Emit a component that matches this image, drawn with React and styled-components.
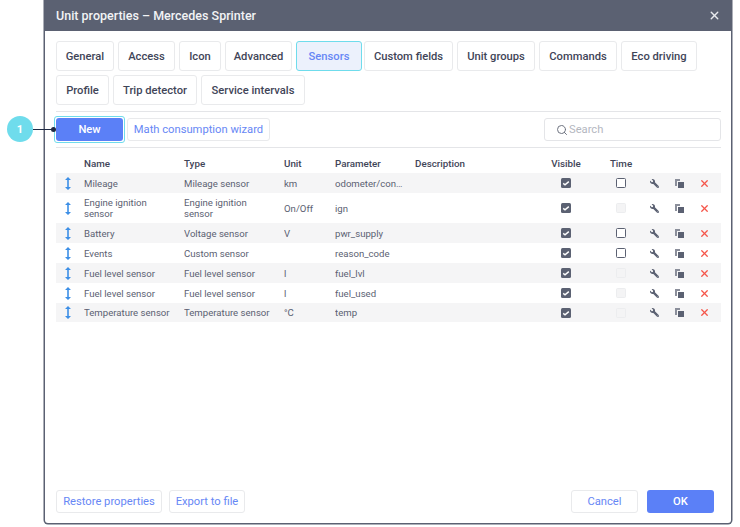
import React from "react";
import styled, { createGlobalStyle } from "styled-components";
import { Search, X } from "lucide-react";
import { FaWrench } from "react-icons/fa";

const GlobalStyle = createGlobalStyle`
  html, body {
    margin: 0;
    padding: 0;
    background: #fff;
  }
  body {
    font-family: Roboto, "Liberation Sans", sans-serif;
  }
`;

const Page = styled.div`
  position: relative;
  width: 740px;
  height: 527px;
  padding-left: 45px;
  box-sizing: border-box;
  overflow: hidden;
`;

const Modal = styled.div`
  width: 686px;
  height: 523px;
  display: flex;
  flex-direction: column;
  background: #fff;
  border-radius: 0 0 3px 3px;
  box-shadow: 0 0 0 1.5px #5b6172;
`;

const Header = styled.div`
  height: 31px;
  flex: none;
  display: flex;
  align-items: center;
  justify-content: space-between;
  padding: 0 10px 0 11px;
  background: #5b6172;
  color: #f2f3f5;
  font-size: 12.5px;
  font-weight: 500;
`;

const CloseButton = styled.span`
  display: flex;
  color: #e8eaee;
`;

const Body = styled.div`
  flex: 1;
  display: flex;
  flex-direction: column;
  padding: 10px 10px 10px 11px;
  min-height: 0;
`;

const Tabs = styled.div`
  display: flex;
  flex-wrap: wrap;
  gap: 4px;
  padding-bottom: 6px;
  border-bottom: 1px solid #e4e5e8;
`;

const Tab = styled.div`
  height: 30px;
  width: ${(p) => p.$w}px;
  box-sizing: border-box;
  display: flex;
  align-items: center;
  justify-content: center;
  border-radius: 3px;
  font-size: 11.2px;
  font-weight: 500;
  color: ${(p) => (p.$active ? "#6787f5" : "#3f4558")};
  background: ${(p) => (p.$active ? "#ecf1fc" : "#fff")};
  border: 1px solid ${(p) => (p.$active ? "#6fdcec" : "#e9eaec")};
  margin-right: ${(p) => (p.$active ? "-2px" : "0")};
`;

const Toolbar = styled.div`
  height: 35px;
  display: flex;
  align-items: center;
  gap: 2px;
  border-bottom: 1px solid #e4e5e8;
`;

const PrimaryButton = styled.div`
  width: ${(p) => p.$w}px;
  height: 23px;
  display: flex;
  align-items: center;
  justify-content: center;
  background: #5b80f7;
  color: #fff;
  font-size: 11.2px;
  font-weight: 500;
  border-radius: 3px;
`;

const FocusRing = styled.div`
  display: flex;
  padding: 1px;
  margin-left: -2px;
  border: 1px solid #6fdcec;
  border-radius: 3px;
`;

const GhostButton = styled.div`
  height: 23px;
  width: ${(p) => p.$w}px;
  box-sizing: border-box;
  display: flex;
  align-items: center;
  justify-content: center;
  border: 1px solid #e9eaec;
  border-radius: 3px;
  color: #6787f5;
  font-size: 11.2px;
`;

const SearchBox = styled.div`
  margin-left: auto;
  width: 177px;
  height: 23px;
  box-sizing: border-box;
  display: flex;
  align-items: center;
  gap: 1px;
  padding-left: 11px;
  border: 1px solid #e4e5e8;
  border-radius: 3px;
  color: #b4b7bf;
  font-size: 11.2px;
  svg {
    color: #6e7380;
  }
`;

const Table = styled.div`
  flex: 1;
  padding-top: 5px;
  display: flex;
  flex-direction: column;
`;

const Row = styled.div`
  display: grid;
  grid-template-columns: 28px 100px 100px 51px 80px 117px 68px 42px 24px 26px 24px 5px;
  align-items: center;
  height: ${(p) => p.$h}px;
  background: ${(p) => (p.$striped ? "#f5f5f6" : "transparent")};
`;

const HeadCell = styled.div`
  font-size: 9.8px;
  font-weight: 500;
  color: #3f4558;
  text-align: ${(p) => (p.$center ? "center" : "left")};
`;

const Cell = styled.div`
  font-size: 9.6px;
  line-height: 11px;
  color: #5b6172;
  white-space: ${(p) => (p.$wrap ? "normal" : "nowrap")};
  overflow: hidden;
  text-overflow: ellipsis;
  padding-right: ${(p) => (p.$wrap ? "10px" : "0")};
`;

const IconCell = styled.div`
  display: flex;
  justify-content: center;
  align-items: center;
  color: ${(p) => p.$color || "#5b6172"};
`;

const DragCell = styled(IconCell)`
  padding-right: 5px;
`;

const Check = styled.div`
  width: 10px;
  height: 10px;
  box-sizing: border-box;
  display: flex;
  align-items: center;
  justify-content: center;
  border-radius: 1.5px;
  border: ${(p) => (p.$on ? "none" : p.$disabled ? "1px solid #ecedef" : "1px solid #5b6172")};
  background: ${(p) => (p.$on ? "#5b6172" : p.$disabled ? "#f4f4f5" : "#fff")};
`;

const Footer = styled.div`
  display: flex;
  align-items: center;
  gap: 7px;
`;

const FooterButton = styled(GhostButton)`
  margin-left: ${(p) => (p.$push ? "auto" : "0")};
`;

const OkButton = styled(PrimaryButton)`
  margin: 0 7px 0 2px;
`;

const Badge = styled.div`
  position: absolute;
  left: 7px;
  top: 116px;
  width: 26px;
  height: 26px;
  border-radius: 50%;
  background: #6fdcec;
  color: #fff;
  font-size: 11px;
  font-weight: 700;
  display: flex;
  align-items: center;
  justify-content: center;
`;

const Leader = styled.div`
  position: absolute;
  left: 33px;
  top: 129px;
  width: 21px;
  height: 1px;
  background: #1f2a44;
  &::after {
    content: "";
    position: absolute;
    right: -2px;
    top: -2px;
    width: 5px;
    height: 5px;
    border-radius: 50%;
    background: #1f2a44;
  }
`;

const DragIcon = () => (
  <svg width="6" height="13" viewBox="0 0 6 13" fill="#3d8fe6">
    <path d="M3 0 6 3H3.8V10H6L3 13 0 10H2.2V3H0Z" />
  </svg>
);

const CheckMark = () => (
  <svg width="8" height="8" viewBox="0 0 8 8" fill="none" stroke="#fff" strokeWidth="1.4">
    <path d="M1.2 4.4 3 5.8 6.8 2.6" />
  </svg>
);

const CopyIcon = () => (
  <svg width="9" height="9" viewBox="0 0 9 9">
    <path d="M0 0H5V2H2V7H0Z" fill="#8b8f9b" />
    <rect x="3" y="3" width="6" height="6" fill="#5b6172" />
  </svg>
);

const tabs = [
  ["General", 58],
  ["Access", 57],
  ["Icon", 42],
  ["Advanced", 67],
  ["Sensors", 66, true],
  ["Custom fields", 89],
  ["Unit groups", 78],
  ["Commands", 78],
  ["Eco driving", 76],
  ["Profile", 53],
  ["Trip detector", 84],
  ["Service intervals", 104],
];

const sensors = [
  { name: "Mileage", type: "Mileage sensor", unit: "km", param: "odometer/con…", time: "off", h: 20 },
  { name: "Engine ignition sensor", type: "Engine ignition sensor", unit: "On/Off", param: "ign", time: "disabled", h: 30 },
  { name: "Battery", type: "Voltage sensor", unit: "V", param: "pwr_supply", time: "off", h: 20 },
  { name: "Events", type: "Custom sensor", unit: "", param: "reason_code", time: "off", h: 20 },
  { name: "Fuel level sensor", type: "Fuel level sensor", unit: "l", param: "fuel_lvl", time: "disabled", h: 20 },
  { name: "Fuel level sensor", type: "Fuel level sensor", unit: "l", param: "fuel_used", time: "disabled", h: 20 },
  { name: "Temperature sensor", type: "Temperature sensor", unit: "°C", param: "temp", time: "disabled", h: 19 },
];

const App = () => {
  return (
    <Page>
      <GlobalStyle />
      <Modal>
        <Header>
          Unit properties – Mercedes Sprinter
          <CloseButton>
            <X size={13} strokeWidth={2.5} />
          </CloseButton>
        </Header>
        <Body>
          <Tabs>
            {tabs.map(([label, w, active]) => (
              <Tab key={label} $w={w} $active={active}>
                {label}
              </Tab>
            ))}
          </Tabs>
          <Toolbar>
            <FocusRing>
              <PrimaryButton $w={67}>New</PrimaryButton>
            </FocusRing>
            <GhostButton $w={143}>Math consumption wizard</GhostButton>
            <SearchBox>
              <Search size={12} />
              Search
            </SearchBox>
          </Toolbar>
          <Table>
            <Row $h={20}>
              <span />
              <HeadCell>Name</HeadCell>
              <HeadCell>Type</HeadCell>
              <HeadCell>Unit</HeadCell>
              <HeadCell>Parameter</HeadCell>
              <HeadCell>Description</HeadCell>
              <HeadCell $center>Visible</HeadCell>
              <HeadCell $center>Time</HeadCell>
            </Row>
            {sensors.map((s, i) => (
              <Row key={i} $h={s.h} $striped={i % 2 === 0}>
                <DragCell>
                  <DragIcon />
                </DragCell>
                <Cell $wrap>{s.name}</Cell>
                <Cell $wrap>{s.type}</Cell>
                <Cell>{s.unit}</Cell>
                <Cell>{s.param}</Cell>
                <span />
                <IconCell>
                  <Check $on>
                    <CheckMark />
                  </Check>
                </IconCell>
                <IconCell>
                  <Check $disabled={s.time === "disabled"} />
                </IconCell>
                <IconCell>
                  <FaWrench size={9} style={{ transform: "scaleX(-1)" }} />
                </IconCell>
                <IconCell>
                  <CopyIcon />
                </IconCell>
                <IconCell $color="#f5564a">
                  <X size={11} strokeWidth={2.8} />
                </IconCell>
              </Row>
            ))}
          </Table>
          <Footer>
            <FooterButton $w={106}>Restore properties</FooterButton>
            <FooterButton $w={76}>Export to file</FooterButton>
            <FooterButton $w={67} $push>
              Cancel
            </FooterButton>
            <OkButton $w={67}>OK</OkButton>
          </Footer>
        </Body>
      </Modal>
      <Badge>1</Badge>
      <Leader />
    </Page>
  );
};

export default App;
